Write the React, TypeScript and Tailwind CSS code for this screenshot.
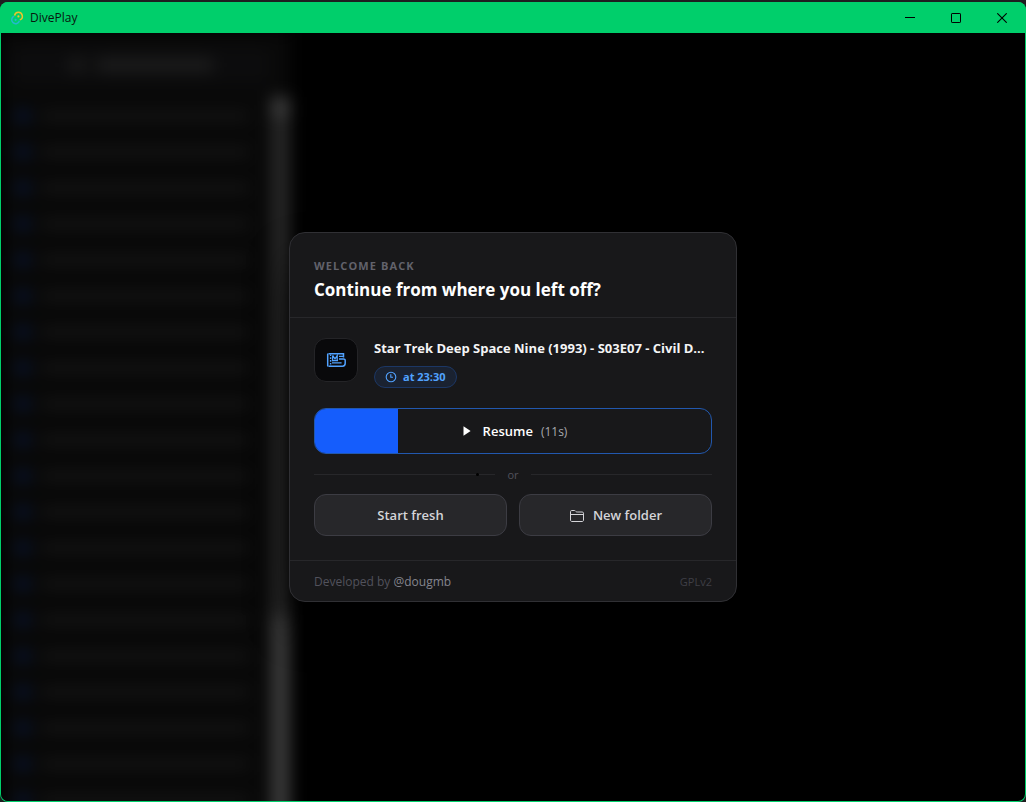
import React from "react";

const episodes = Array.from({ length: 21 }, (_, i) => i);

function AppLogo() {
  return (
    <svg width="14" height="14" viewBox="0 0 14 14" fill="none" aria-hidden="true">
      <path d="M4.6 4.6A3.9 3.9 0 1 1 9.8 8.9" stroke="#ecc52c" strokeWidth="1.5" />
      <path d="M9.4 9.6A3.9 3.9 0 1 1 4.2 5.1" stroke="#24b8cf" strokeWidth="1.5" />
      <circle cx="8.4" cy="5.4" r="1.1" fill="#ecc52c" />
      <circle cx="5.6" cy="8.8" r="1.1" fill="#24b8cf" />
    </svg>
  );
}

function TitleBar() {
  return (
    <header className="flex h-[31px] shrink-0 items-center justify-between bg-[#00cf6b] pr-px pl-[10px]">
      <div className="flex items-center gap-[6px]">
        <AppLogo />
        <span className="text-[12px] leading-4 text-[#07170e]">DivePlay</span>
      </div>
      <div className="flex h-full text-black">
        <button aria-label="Minimize" className="grid h-full w-[46px] place-items-center">
          <svg width="10" height="10" viewBox="0 0 10 10" stroke="currentColor" shapeRendering="crispEdges" aria-hidden="true">
            <path d="M0 4.5H10" />
          </svg>
        </button>
        <button aria-label="Maximize" className="grid h-full w-[46px] place-items-center">
          <svg width="10" height="10" viewBox="0 0 10 10" fill="none" stroke="currentColor" aria-hidden="true">
            <rect x="0.5" y="0.5" width="9" height="9" rx="0.6" />
          </svg>
        </button>
        <button aria-label="Close" className="grid h-full w-[46px] place-items-center">
          <svg width="10" height="10" viewBox="0 0 10 10" stroke="currentColor" aria-hidden="true">
            <path d="M0.3 0.3L9.7 9.7M9.7 0.3L0.3 9.7" strokeWidth="1.1" />
          </svg>
        </button>
      </div>
    </header>
  );
}

function Sidebar() {
  return (
    <aside className="flex h-[calc(100%+40px)] w-[289px] flex-col blur-[8px]" aria-hidden="true">
      <div className="flex h-16 shrink-0 items-center bg-[#090909] pl-3">
        <div className="flex h-9 w-[256px] items-center justify-center gap-3 rounded-lg bg-[#0c0c0d]">
          <span className="h-3 w-4 bg-[#1d1d1d]" />
          <span className="h-3 w-[116px] bg-[#1f1f1f]" />
        </div>
      </div>
      <div className="flex min-h-0 flex-1">
        <div className="flex-1 overflow-hidden bg-[#080808] pt-px">
          {episodes.map((n) => (
            <div key={n} className="flex h-9 items-center gap-3 pl-4">
              <span className="h-3 w-3 bg-[#081738]" />
              <span className="h-2 w-[208px] bg-[#171717]" />
            </div>
          ))}
        </div>
        <div className="flex w-[19px] flex-col bg-[#272727]">
          <span className="h-5 bg-[#3c3c3c]" />
          <span className="flex-1" />
          <span className="h-[226px] bg-[#3b3b3b]" />
        </div>
      </div>
    </aside>
  );
}

function FilmIcon() {
  return (
    <svg width="20" height="16" viewBox="0 0 20 16" fill="none" stroke="#51a2ff" aria-hidden="true">
      <path d="M2.5 1.7H17.5V5.5M2.5 14.2H16.5C18.2 14.2 19.2 13 19.2 11.3V8.5C19.2 7.4 18.6 7 17.6 7H13" strokeWidth="1.5" />
      <path d="M1.7 1.5V14.5" strokeWidth="1.5" />
      <path d="M4.6 2.5V14" strokeWidth="1.4" strokeDasharray="1.6 1.2" />
      <path d="M6.6 3.4V9.2M6.6 3.4L9 6.8L11.2 3.6V8M13 4.3H17" strokeWidth="1.3" />
      <path d="M6 10.8H15.6M6.6 8.7H12" strokeWidth="1.3" />
    </svg>
  );
}

function ClockIcon() {
  return (
    <svg width="12" height="12" viewBox="0 0 12 12" fill="none" stroke="currentColor" aria-hidden="true">
      <circle cx="6" cy="6" r="4.8" strokeWidth="1.1" />
      <path d="M5.8 3.2V6.2H8" strokeWidth="1.1" />
    </svg>
  );
}

function FolderIcon() {
  return (
    <svg width="16" height="14" viewBox="0 0 16 14" fill="none" stroke="currentColor" strokeLinejoin="round" aria-hidden="true">
      <path d="M1.5 11V2.7C1.5 1.9 2 1.5 2.7 1.5H5.4C6 1.5 6.3 1.8 6.8 2.4C7.2 2.8 7.5 3 8.2 3H13.2C14 3 14.5 3.5 14.5 4.2V11C14.5 12 14 12.5 13 12.5H3C2 12.5 1.5 12 1.5 11Z" />
      <path d="M1.5 5.5H14.5" />
    </svg>
  );
}

function ResumeDialog() {
  return (
    <section
      role="dialog"
      aria-labelledby="resume-title"
      className="w-full max-w-[448px] overflow-hidden rounded-[16px] border border-[#303034] bg-[#18181a] shadow-2xl shadow-black"
    >
      <div className="border-b border-[#27272a] px-6 pt-6 pb-[14px]">
        <p className="text-[11px] leading-[18px] font-bold tracking-widest text-[#62626b] uppercase">Welcome back</p>
        <h1 id="resume-title" className="mt-[2px] text-[17px] leading-[26px] font-bold text-white">
          Continue from where you left off?
        </h1>
      </div>

      <div className="px-6 pt-5 pb-6">
        <div className="flex items-start gap-4">
          <div className="grid size-11 shrink-0 place-items-center rounded-[12px] border border-[#242427] bg-[#09090b]">
            <FilmIcon />
          </div>
          <div className="min-w-0 flex-1">
            <p className="text-[13px] leading-5 font-bold whitespace-nowrap text-[#f4f4f5]">
              Star Trek Deep Space Nine (1993) - S03E07 - Civil D...
            </p>
            <span className="mt-2 inline-flex h-[22px] items-center gap-[6px] rounded-full border border-[#1c3765] bg-[#1a2231] px-[10px] align-top text-[11px] font-bold text-[#51a2ff]">
              <ClockIcon />
              at 23:30
            </span>
          </div>
        </div>

        <button className="relative mt-5 flex h-[46px] w-full items-center justify-center overflow-hidden rounded-[12px] border border-[#2258ae] pl-1 text-white">
          <span className="absolute inset-y-0 left-0 w-[21%] bg-[#155dfc]" />
          <svg className="relative mr-3" width="8" height="10" viewBox="0 0 8 10" fill="currentColor" aria-hidden="true">
            <path d="M0.5 0.3L7.6 5L0.5 9.7Z" />
          </svg>
          <span className="relative pt-px text-[13px] font-semibold">Resume</span>
          <span className="relative ml-2 pt-px text-[12px] text-[#a9a9ae]">(11s)</span>
        </button>

        <div className="my-3 flex items-center gap-3">
          <span className="relative h-px flex-1 bg-[#27272a]">
            <span className="absolute -top-px right-4 size-[3px] rounded-full bg-black" />
          </span>
          <span className="pt-px text-[11px] leading-[15px] text-[#52525c]">or</span>
          <span className="h-px flex-1 bg-[#27272a]" />
        </div>

        <div className="grid grid-cols-2 gap-3">
          <button className="h-[42px] rounded-[12px] border border-[#3c3c43] bg-[#27272a] pt-px text-[13px] font-semibold text-[#d4d4d8]">
            Start fresh
          </button>
          <button className="flex h-[42px] items-center justify-center gap-2 rounded-[12px] border border-[#3c3c43] bg-[#27272a] pt-px text-[13px] font-semibold text-[#d4d4d8]">
            <FolderIcon />
            New folder
          </button>
        </div>
      </div>

      <footer className="flex items-center justify-between border-t border-[#27272a] px-6 pt-[13px] pb-[11px] text-[11px] leading-4">
        <span className="text-[12px] text-[#52525c]">
          Developed by{" "}
          <a href="#dougmb" className="text-[#85858e]">
            @dougmb
          </a>
        </span>
        <span className="text-[#3f3f46]">GPLv2</span>
      </footer>
    </section>
  );
}

export default function App() {
  return (
    <div className="h-screen bg-[#1e1e20] pt-[2px] font-['Open_Sans','Noto_Sans',sans-serif]">
      <div className="flex h-full flex-col overflow-hidden rounded-[8px] bg-[#00cf6b]">
        <TitleBar />
        <main className="relative mx-px mb-px min-h-0 flex-1 overflow-hidden rounded-b-[7px] bg-black">
          <Sidebar />
          <div className="absolute inset-0 flex items-center justify-center">
            <ResumeDialog />
          </div>
        </main>
      </div>
    </div>
  );
}
